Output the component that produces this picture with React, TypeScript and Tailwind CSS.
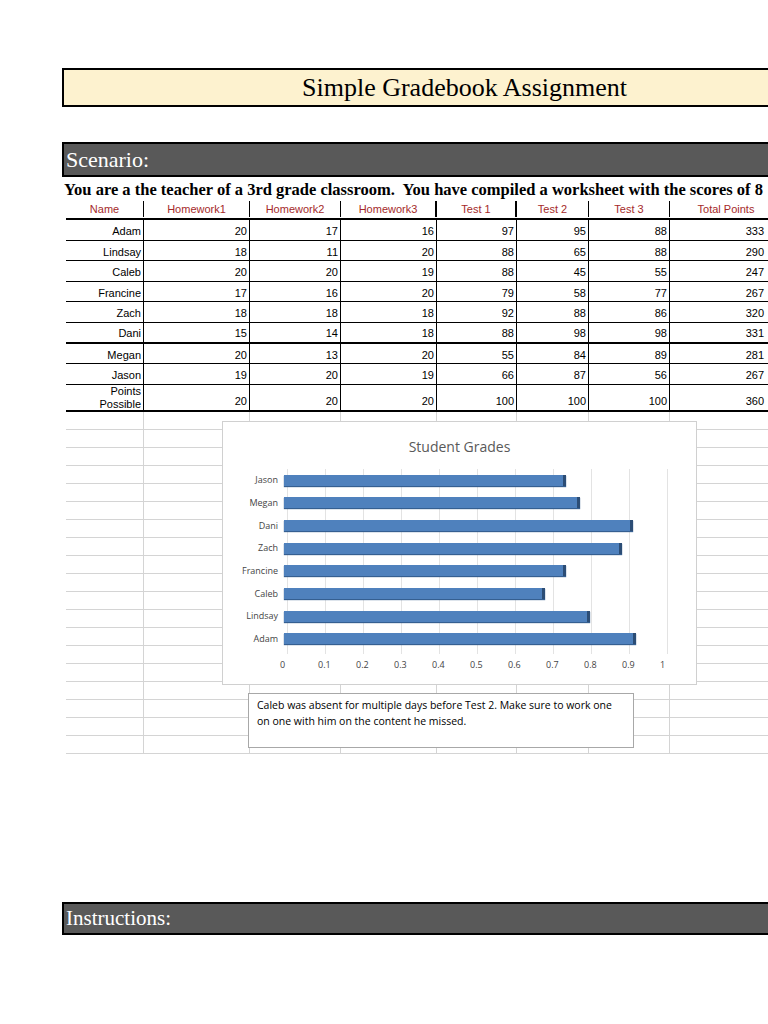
import React from 'react';

const cols = [78, 106, 91, 96, 80, 72, 81, 112];
const headers = ['Name', 'Homework1', 'Homework2', 'Homework3', 'Test 1', 'Test 2', 'Test 3', 'Total Points'];
const rows: [string, number[]][] = [
  ['Adam', [20, 17, 16, 97, 95, 88, 333]],
  ['Lindsay', [18, 11, 20, 88, 65, 88, 290]],
  ['Caleb', [20, 20, 19, 88, 45, 55, 247]],
  ['Francine', [17, 16, 20, 79, 58, 77, 267]],
  ['Zach', [18, 18, 18, 92, 88, 86, 320]],
  ['Dani', [15, 14, 18, 88, 98, 98, 331]],
  ['Megan', [20, 13, 20, 55, 84, 89, 281]],
  ['Jason', [19, 20, 19, 66, 87, 56, 267]],
];
const bars: [string, number][] = [
  ['Jason', 0.742], ['Megan', 0.78], ['Dani', 0.919], ['Zach', 0.889],
  ['Francine', 0.742], ['Caleb', 0.686], ['Lindsay', 0.806], ['Adam', 0.925],
];

const App: React.FC = () => {
  return (
    <div className="w-[768px] h-[1024px] overflow-hidden bg-white pl-[62px] pt-[68px]" style={{ fontFamily: '"Liberation Serif", serif' }}>
      <div className="h-[39px] w-[780px] border-2 border-black bg-[#fdf2cf] flex items-center">
        <div className="pl-[238px] text-[26px] text-black whitespace-nowrap">Simple Gradebook Assignment</div>
      </div>
      <div className="mt-[35px] h-[35px] w-[780px] border-2 border-black bg-[#595959] flex items-center px-[2px] text-white text-[22px]">Scenario:</div>
      <div className="mt-[3px] whitespace-nowrap text-[16.5px] font-bold text-black leading-[20px] pl-[2px]">You are a the teacher of a 3rd grade classroom.&nbsp; You have compiled a worksheet with the scores of 8</div>
      <div className="relative w-[760px] ml-[4px] text-[11px]" style={{ fontFamily: '"Liberation Sans", Arial, sans-serif' }}>
        <div className="flex h-[20px] border-b-2 border-black items-center text-[#a52a2a]">
          {headers.map((h, i) => (
            <div key={h} className={`shrink-0 text-center whitespace-nowrap ${i < 7 ? 'border-r border-black' : ''} ${i === 3 || i === 4 ? 'border-r-2' : ''}`} style={{ width: cols[i] }}>{h}</div>
          ))}
        </div>
        {rows.map(([n, v], r) => (
          <div key={n} className={`flex h-[20.6px] items-end text-black border-b ${r === 5 ? 'border-b-2' : ''} border-black`}>
            <div className="shrink-0 text-right pr-[2px] border-r border-black h-full flex items-end justify-end" style={{ width: cols[0] }}>{n}</div>
            {v.map((x, i) => (
              <div key={i} className={`shrink-0 text-right h-full flex items-end justify-end ${i < 6 ? 'border-r border-black pr-[2px]' : 'pr-0'}`} style={{ width: i < 6 ? cols[i + 1] : 94 }}>{x}</div>
            ))}
          </div>
        ))}
        <div className="flex h-[27px] text-black border-b-2 border-black">
          <div className="shrink-0 text-right pr-[2px] border-r border-black leading-[13px]" style={{ width: cols[0] }}>Points<br />Possible</div>
          {[20, 20, 20, 100, 100, 100, 360].map((x, i) => (
            <div key={i} className={`shrink-0 text-right flex items-end justify-end ${i < 6 ? 'border-r border-black pr-[2px]' : ''}`} style={{ width: i < 6 ? cols[i + 1] : 94 }}>{x}</div>
          ))}
        </div>
        <div className="relative">
          {Array.from({ length: 19 }).map((_, r) => (
            <div key={r} className="flex h-[18px] border-b border-[#d4d4d4]">
              {cols.map((w, i) => (
                <div key={i} className="shrink-0 border-r border-[#d4d4d4]" style={{ width: w }} />
              ))}
            </div>
          ))}
          <div className="absolute left-[156px] top-[9px] w-[475px] h-[264px] bg-white border border-[#d0d0d0] flex flex-col" style={{ fontFamily: '"Open Sans", "Liberation Sans", sans-serif' }}>
            <div className="text-center text-[#595959] text-[14px] mt-[14px]">Student Grades</div>
            <div className="flex mt-[12px] ml-[10px]">
              <div className="w-[51px] flex flex-col text-[9px] text-[#444] text-right pr-[6px]">
                {bars.map(([n]) => (
                  <div key={n} className="h-[22.7px] flex items-center justify-end">{n}</div>
                ))}
              </div>
              <div className="relative w-[380px]">
                {[0, 1, 2, 3, 4, 5, 6, 7, 8, 9, 10].map((t) => (
                  <div key={t} className="absolute top-0 h-[185px] border-l border-[#e3e3e3]" style={{ left: t * 38 + 3 }} />
                ))}
                {bars.map(([n, v]) => (
                  <div key={n} className="relative h-[22.7px] flex items-center">
                    <div className="h-[11px] bg-[#4f81bd] border-r-[3px] border-[#2c4d75] shadow-[0_1px_1px_#355f91]" style={{ width: v * 380 }} />
                  </div>
                ))}
                <div className="flex text-[9px] text-[#444] mt-[8px] -ml-[4px]">
                  {['0', '0.1', '0.2', '0.3', '0.4', '0.5', '0.6', '0.7', '0.8', '0.9', '1'].map((t) => (
                    <div key={t} className="w-[38px] shrink-0">{t}</div>
                  ))}
                </div>
              </div>
            </div>
          </div>
          <div className="absolute left-[182px] top-[281px] w-[386px] h-[55px] bg-white border border-[#a8a8a8] px-[8px] pt-[3px] text-[10.5px] leading-[16px] text-black" style={{ fontFamily: '"Open Sans", "Liberation Sans", sans-serif' }}>
            Caleb was absent for multiple days before Test 2. Make sure to work one on one with him on the content he missed.
          </div>
        </div>
      </div>
      <div className="mt-[148px] h-[33px] w-[780px] border-2 border-black bg-[#595959] flex items-center px-[2px] text-white text-[21px]">Instructions:</div>
    </div>
  );
};

export default App;
